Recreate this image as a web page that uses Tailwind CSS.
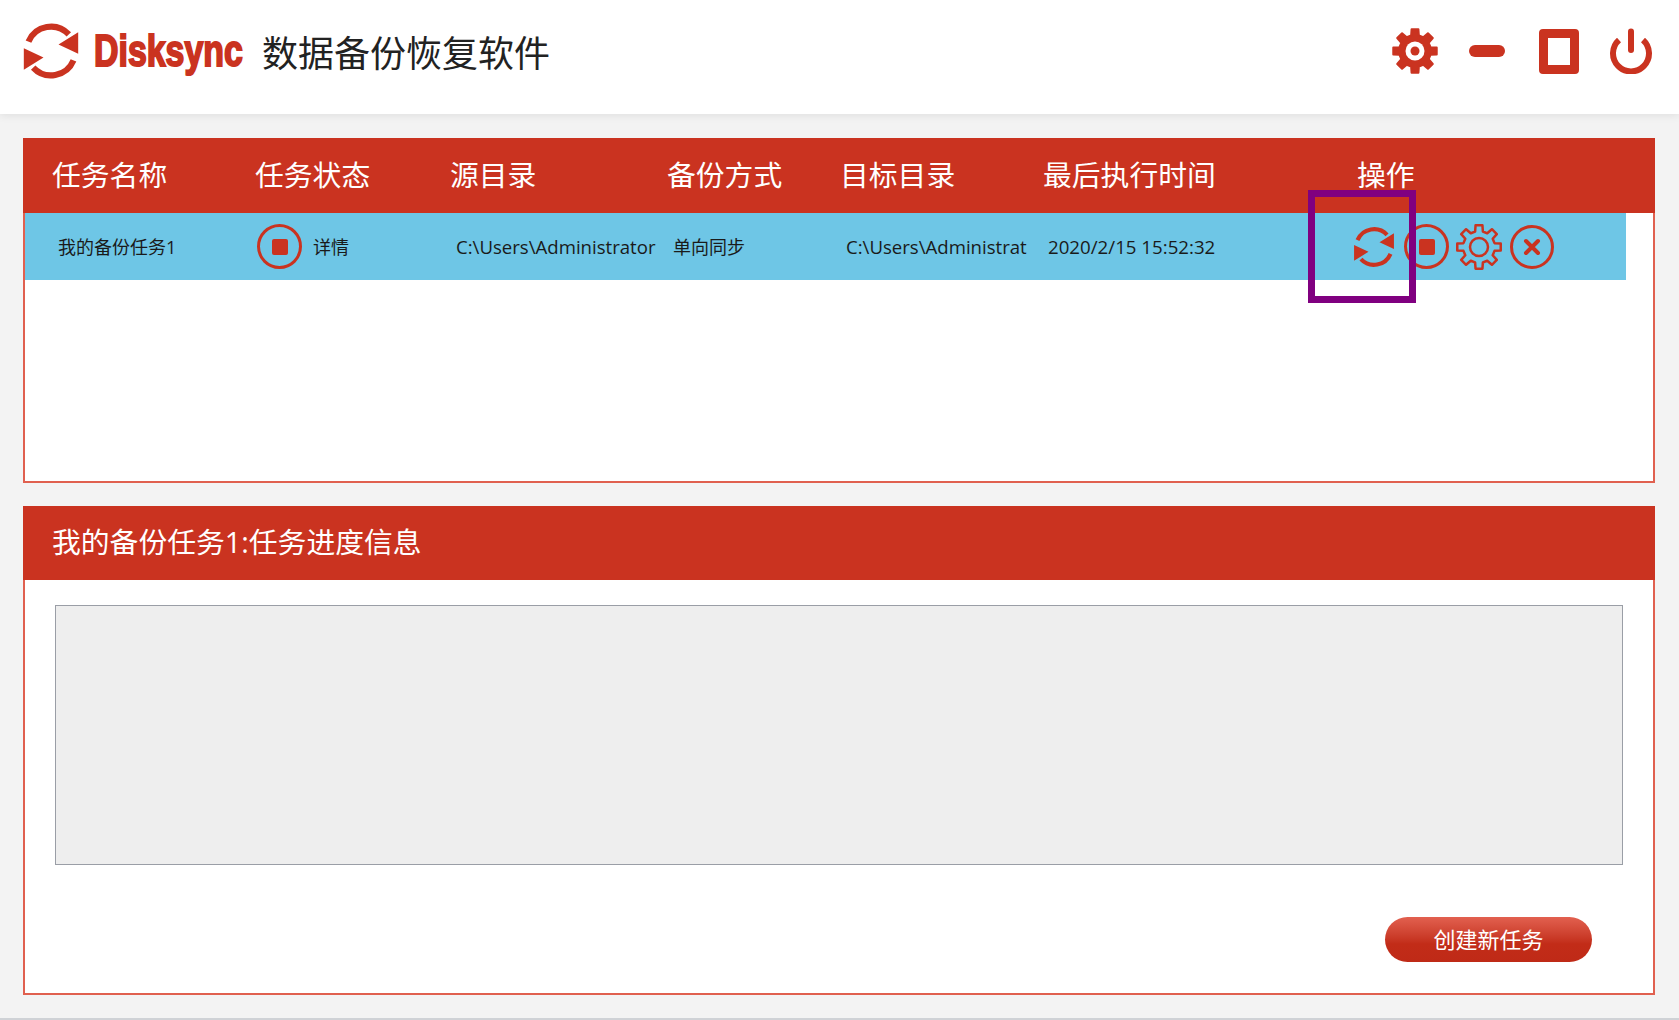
<!DOCTYPE html>
<html lang="zh-CN">
<head>
    <meta charset="UTF-8">
    <title>Disksync 数据备份恢复软件</title>
    <script src="https://cdn.jsdelivr.net/npm/@tailwindcss/browser@4"></script>
</head>
<body class="relative w-[1679px] h-[1020px] overflow-hidden bg-[#f3f3f3] font-['Open_Sans','Noto_Sans_CJK_SC',sans-serif] text-[#1a1a1a]">
    <!-- title bar -->
    <header class="flex items-center h-[114px] pl-[21px] pr-[12px] pb-[12px] bg-white shadow-[0_2px_8px_rgba(0,0,0,0.08)]">
        <svg class="w-[60px] h-[60px] text-[#ca3320]" viewBox="-32 -32 64 64" fill="none">
            <path d="M-24-10A26 26 0 0 1 19-17.7M24 10A26 26 0 0 1-19 17.7" stroke="currentColor" stroke-width="6.5"/>
            <path d="M29-20V3L8-7ZM-29 20V-3L-8 7Z" fill="currentColor"/>
        </svg>
        <div class="w-[168px] ml-[13px] font-['Liberation_Sans'] font-bold text-[44px] leading-none text-[#ca3320] origin-left scale-x-[0.77] [-webkit-text-stroke:2px_#ca3320]">Disksync</div>
        <div class="text-[36px] leading-none font-['Noto_Sans_CJK_SC',sans-serif] text-[#222]">数据备份恢复软件</div>
        <div class="flex ml-auto text-[#ca3320]">
            <button class="flex items-center justify-center w-[72px] h-[48px]">
                <svg class="w-[48px] h-[48px]" viewBox="-24 -24 48 48">
                    <path fill="currentColor" stroke="currentColor" stroke-width="2" stroke-linejoin="round" d="M-3.87-15.52L-3.44-21.73H3.44L3.87-15.52L8.24-13.71L12.93-17.8L17.8-12.93L13.71-8.24L15.52-3.87L21.73-3.44V3.44L15.52 3.87L13.71 8.24L17.8 12.93L12.93 17.8L8.24 13.71L3.87 15.52L3.44 21.73H-3.44L-3.87 15.52L-8.24 13.71L-12.93 17.8L-17.8 12.93L-13.71 8.24L-15.52 3.87L-21.73 3.44V-3.44L-15.52-3.87L-13.71-8.24L-17.8-12.93L-12.93-17.8L-8.24-13.71Z"/>
                    <circle r="9.5" fill="#fff"/>
                    <circle r="4.5" fill="currentColor"/>
                </svg>
            </button>
            <button class="flex items-center justify-center w-[72px] h-[48px]">
                <span class="block w-[36px] h-[12px] rounded-full bg-[#ca3320]"></span>
            </button>
            <button class="flex items-center justify-center w-[72px] h-[48px]">
                <span class="block w-[40px] h-[45px] rounded-[4px] border-[9px] border-[#ca3320]"></span>
            </button>
            <button class="flex items-center justify-center w-[72px] h-[48px]">
                <svg class="w-[46px] h-[46px]" viewBox="0 0 46 46" fill="none" stroke="currentColor" stroke-width="6" stroke-linecap="round">
                    <path d="M23 3.5V22"/>
                    <path d="M11 12A18 18 0 1 0 35 12" stroke-linecap="butt"/>
                </svg>
            </button>
        </div>
    </header>

    <main class="pl-[23px] pr-[24px] pt-[24px]">
        <!-- task list -->
        <section class="h-[345px] border-2 border-t-0 border-[#e0604f] bg-white">
            <div class="flex items-center h-[75px] pb-[3px] -mx-[2px] pl-[29px] bg-[#ca3320] text-white text-[28.8px] font-['Noto_Sans_CJK_SC',sans-serif]">
                <div class="w-[203px]">任务名称</div>
                <div class="w-[195px]">任务状态</div>
                <div class="w-[217px]">源目录</div>
                <div class="w-[173px]">备份方式</div>
                <div class="w-[203px]">目标目录</div>
                <div class="w-[314px]">最后执行时间</div>
                <div>操作</div>
            </div>
            <div class="flex items-center h-[67px] w-[1601px] pl-[33px] bg-[#6ec6e6] text-[18px] leading-[26px]">
                <div class="w-[199px]">我的备份任务1</div>
                <div class="flex items-center w-[199px]">
                    <span class="flex items-center justify-center w-[45px] h-[45px] rounded-full border-[3px] border-[#ca3320]">
                        <span class="block w-[16px] h-[16px] rounded-[2px] bg-[#ca3320]"></span>
                    </span>
                    <span class="ml-[11px]">详情</span>
                </div>
                <div class="w-[217px] whitespace-nowrap text-[18.6px]">C:\Users\Administrator</div>
                <div class="w-[173px]">单向同步</div>
                <div class="w-[202px] whitespace-nowrap text-[18.6px]">C:\Users\Administrat</div>
                <div class="w-[304px] whitespace-nowrap text-[18.7px]">2020/2/15 15:52:32</div>
                <div class="flex items-center text-[#ca3320]">
                    <svg class="w-[44px] h-[44px] mr-[8px]" viewBox="-32 -32 64 64" fill="none">
                        <path d="M-24-10A26 26 0 0 1 19-17.7M24 10A26 26 0 0 1-19 17.7" stroke="currentColor" stroke-width="6"/>
                        <path d="M29-20V3L8-7ZM-29 20V-3L-8 7Z" fill="currentColor"/>
                    </svg>
                    <span class="flex items-center justify-center w-[45px] h-[45px] mr-[6px] rounded-full border-[3px] border-[#ca3320]">
                        <span class="block w-[16px] h-[16px] rounded-[2px] bg-[#ca3320]"></span>
                    </span>
                    <svg class="w-[48px] h-[48px] mr-[7px]" viewBox="-24 -24 48 48" fill="none" stroke="currentColor" stroke-width="2.5" stroke-linejoin="round">
                        <path d="M-3.87-15.52L-3.44-21.73H3.44L3.87-15.52L8.24-13.71L12.93-17.8L17.8-12.93L13.71-8.24L15.52-3.87L21.73-3.44V3.44L15.52 3.87L13.71 8.24L17.8 12.93L12.93 17.8L8.24 13.71L3.87 15.52L3.44 21.73H-3.44L-3.87 15.52L-8.24 13.71L-12.93 17.8L-17.8 12.93L-13.71 8.24L-15.52 3.87L-21.73 3.44V-3.44L-15.52-3.87L-13.71-8.24L-17.8-12.93L-12.93-17.8L-8.24-13.71Z"/>
                        <circle r="9"/>
                    </svg>
                    <svg class="w-[44px] h-[44px]" viewBox="0 0 44 44" fill="none" stroke="currentColor">
                        <circle cx="22" cy="22" r="20.5" stroke-width="3"/>
                        <path d="M16 16L28 28M28 16L16 28" stroke-width="4" stroke-linecap="round"/>
                    </svg>
                </div>
            </div>
        </section>

        <!-- progress panel -->
        <section class="h-[489px] mt-[23px] border-2 border-t-0 border-[#e0604f] bg-white">
            <div class="flex items-center h-[74px] pb-[3px] -mx-[2px] pl-[29px] bg-[#ca3320] text-white text-[28.8px] font-['Open_Sans','Noto_Sans_CJK_SC',sans-serif]">我的备份任务1:任务进度信息</div>
            <div class="h-[260px] w-[1568px] mt-[25px] ml-[30px] border border-[#9a9ea6] bg-[#eeeeee]"></div>
            <div class="flex justify-end mt-[52px] pr-[61px]">
                <button class="w-[207px] h-[45px] pb-[2px] rounded-full bg-linear-to-b from-[#e2604f] via-[#c22c18] via-60% to-[#bf2a17] text-white text-[22px] font-['Noto_Sans_CJK_SC',sans-serif]">创建新任务</button>
            </div>
        </section>
    </main>

    <!-- window bottom edge -->
    <div class="absolute left-0 bottom-0 w-full h-[2px] bg-[#cfd2d6]"></div>

    <!-- annotation box -->
    <div class="absolute left-[1308px] top-[190px] w-[108px] h-[113px] border-[7px] border-[#800080]"></div>
</body>
</html>
